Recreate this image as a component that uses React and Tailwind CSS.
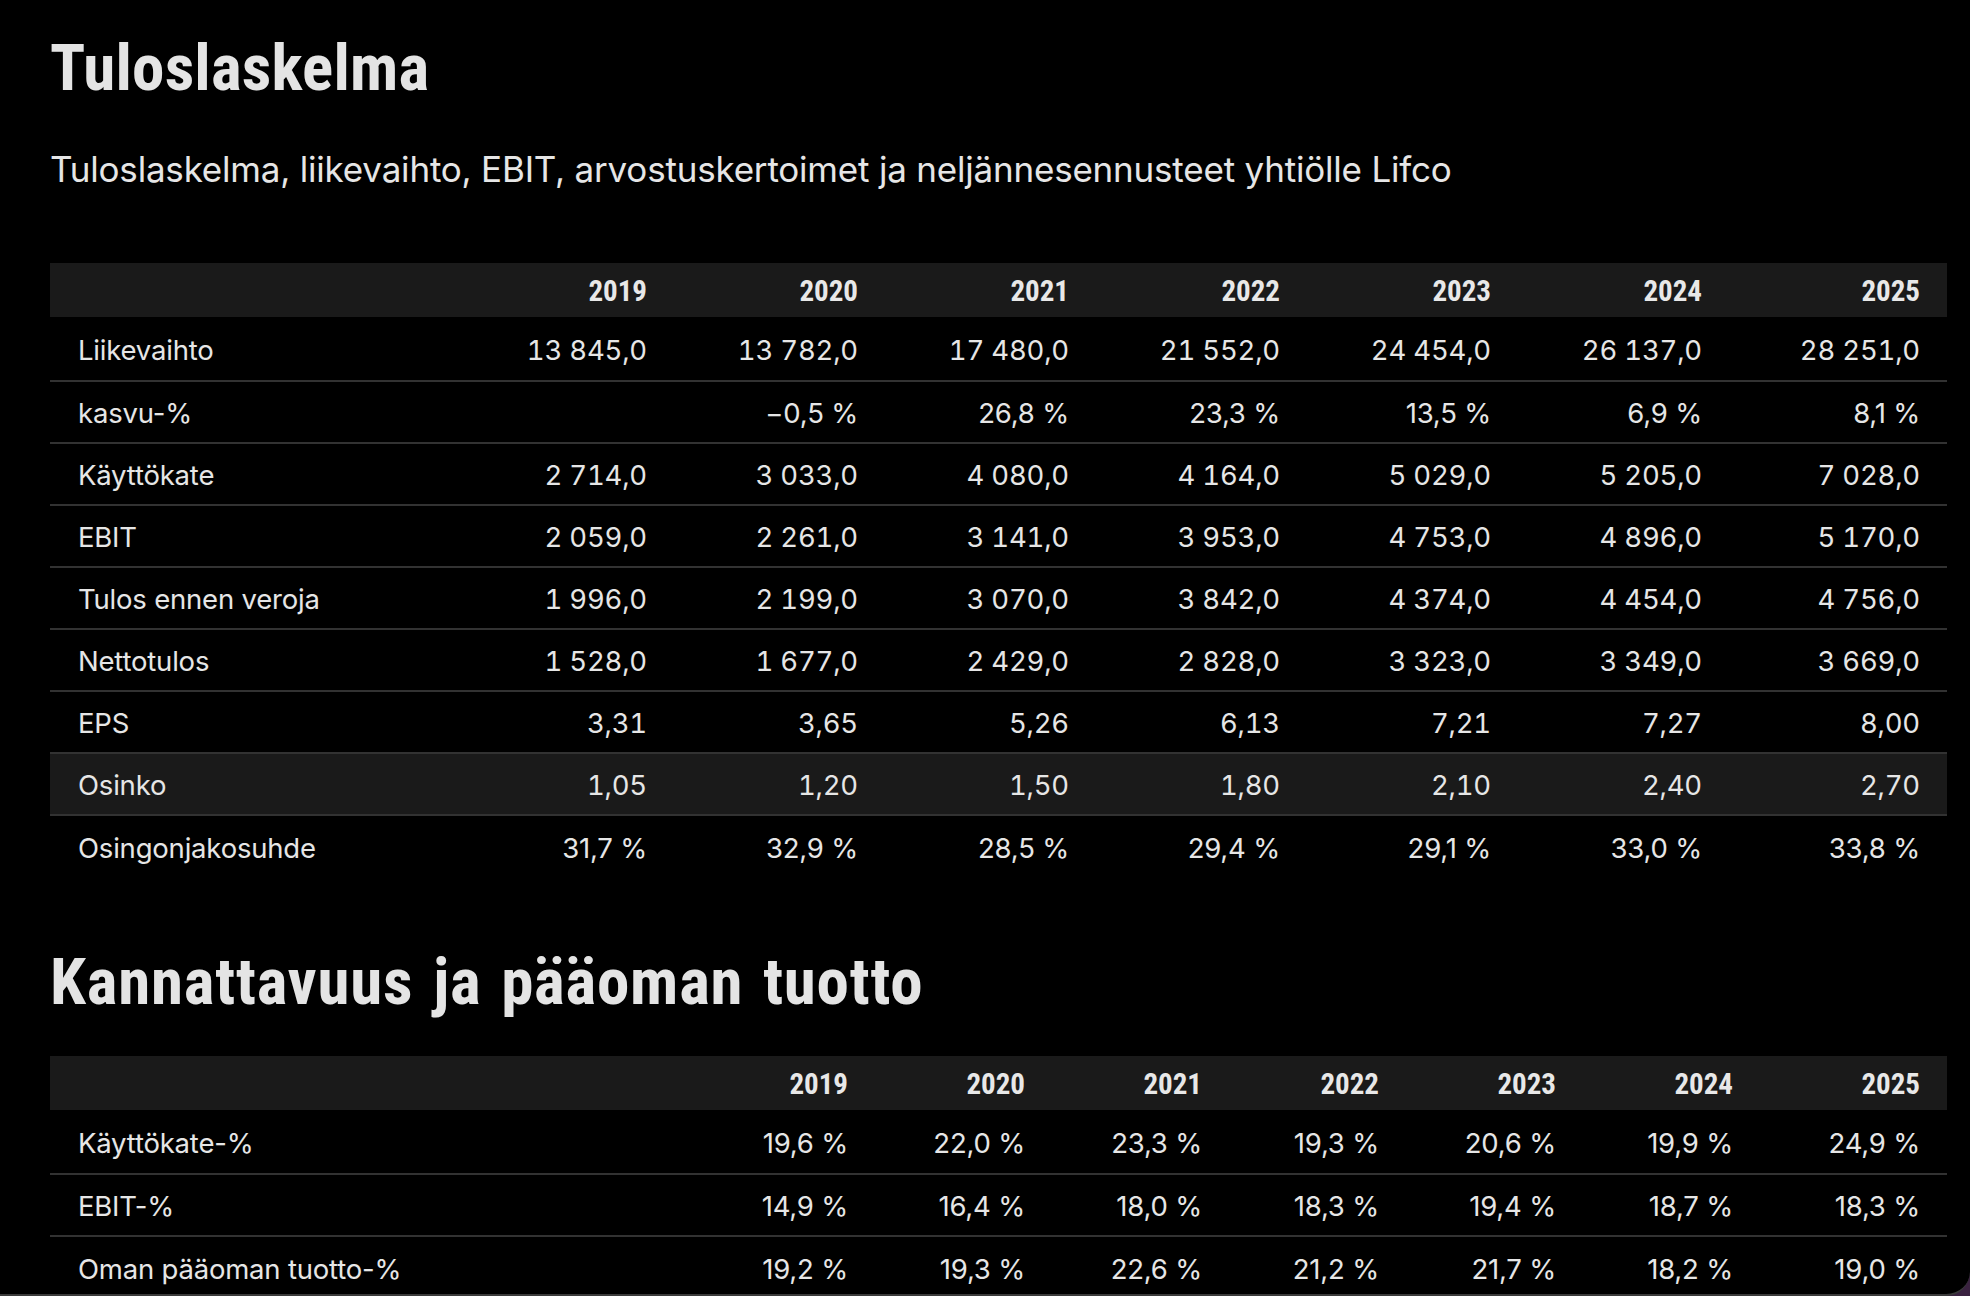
const years = ['2019', '2020', '2021', '2022', '2023', '2024', '2025'];

const income = [
  ['Liikevaihto', ['13 845,0', '13 782,0', '17 480,0', '21 552,0', '24 454,0', '26 137,0', '28 251,0']],
  ['kasvu-%', ['', '\u22120,5 %', '26,8 %', '23,3 %', '13,5 %', '6,9 %', '8,1 %']],
  ['Käyttökate', ['2 714,0', '3 033,0', '4 080,0', '4 164,0', '5 029,0', '5 205,0', '7 028,0']],
  ['EBIT', ['2 059,0', '2 261,0', '3 141,0', '3 953,0', '4 753,0', '4 896,0', '5 170,0']],
  ['Tulos ennen veroja', ['1 996,0', '2 199,0', '3 070,0', '3 842,0', '4 374,0', '4 454,0', '4 756,0']],
  ['Nettotulos', ['1 528,0', '1 677,0', '2 429,0', '2 828,0', '3 323,0', '3 349,0', '3 669,0']],
  ['EPS', ['3,31', '3,65', '5,26', '6,13', '7,21', '7,27', '8,00']],
  ['Osinko', ['1,05', '1,20', '1,50', '1,80', '2,10', '2,40', '2,70']],
  ['Osingonjakosuhde', ['31,7 %', '32,9 %', '28,5 %', '29,4 %', '29,1 %', '33,0 %', '33,8 %']],
];

const profit = [
  ['Käyttökate-%', ['19,6 %', '22,0 %', '23,3 %', '19,3 %', '20,6 %', '19,9 %', '24,9 %']],
  ['EBIT-%', ['14,9 %', '16,4 %', '18,0 %', '18,3 %', '19,4 %', '18,7 %', '18,3 %']],
  ['Oman pääoman tuotto-%', ['19,2 %', '19,3 %', '22,6 %', '21,2 %', '21,7 %', '18,2 %', '19,0 %']],
];

const HEAD = { fontFamily: '"Roboto Condensed", "Liberation Sans Narrow", sans-serif' };
const BODY = { fontFamily: 'Inter, "Liberation Sans", sans-serif' };

function Table({ rows, cols, highlight }) {
  return (
    <div className="w-[1897px]">
      <div className={`grid ${cols} h-[54px] items-center pt-[4px] bg-[#1a1a1a] font-bold text-[29px] text-[#e8e8e8]`} style={HEAD}>
        <div />
        {years.map((y) => (
          <div key={y} className="text-right pr-[27px]">{y}</div>
        ))}
      </div>
      {rows.map(([label, vals], i) => {
        const last = i === rows.length - 1;
        const first = i === 0;
        return (
          <div
            key={label}
            className={`grid ${cols} items-center pt-[4px] text-[27.5px] text-[#e6e6e6] tracking-[-0.2px] ${first ? 'h-[65px]' : 'h-[62px]'} ${last ? '' : 'border-b-2 border-[#323232]'} ${highlight === i ? 'bg-[#1a1a1a]' : ''}`}
          >
            <div className="pl-[28px] whitespace-nowrap">{label}</div>
            {vals.map((v, j) => (
              <div
                key={j}
                className={`text-right pr-[27px] whitespace-nowrap ${v.includes('%') ? 'proportional-nums' : 'tabular-nums'}`}
              >
                {v}
              </div>
            ))}
          </div>
        );
      })}
    </div>
  );
}

export default function App() {
  return (
    <div className="h-[1296px] w-full overflow-hidden bg-[#3a2240]">
      <div
        className="h-[1296px] w-full bg-black rounded-br-[24px] border-b-2 border-[#3a3a3a] overflow-hidden pl-[50px] pt-[36px]"
        style={BODY}
      >
        <h1 className="text-[65px] leading-[65px] font-bold text-[#e4e4e4] tracking-[0.2px]" style={HEAD}>Tuloslaskelma</h1>
        <p className="mt-[44px] text-[35px] leading-[49px] text-[#e6e6e6] tracking-[-0.2px]">
          Tuloslaskelma, liikevaihto, EBIT, arvostuskertoimet ja neljännesennusteet yhtiölle Lifco
        </p>
        <div className="mt-[69px]">
          <Table rows={income} cols="grid-cols-[413px_repeat(6,211px)_1fr]" highlight={7} />
        </div>
        <h2 className="mt-[72px] text-[65px] leading-[65px] font-bold text-[#e4e4e4] tracking-[0.8px] [word-spacing:4px]" style={HEAD}>
          Kannattavuus ja pääoman tuotto
        </h2>
        <div className="mt-[41px]">
          <Table rows={profit} cols="grid-cols-[648px_repeat(6,177px)_1fr]" />
        </div>
      </div>
    </div>
  );
}
